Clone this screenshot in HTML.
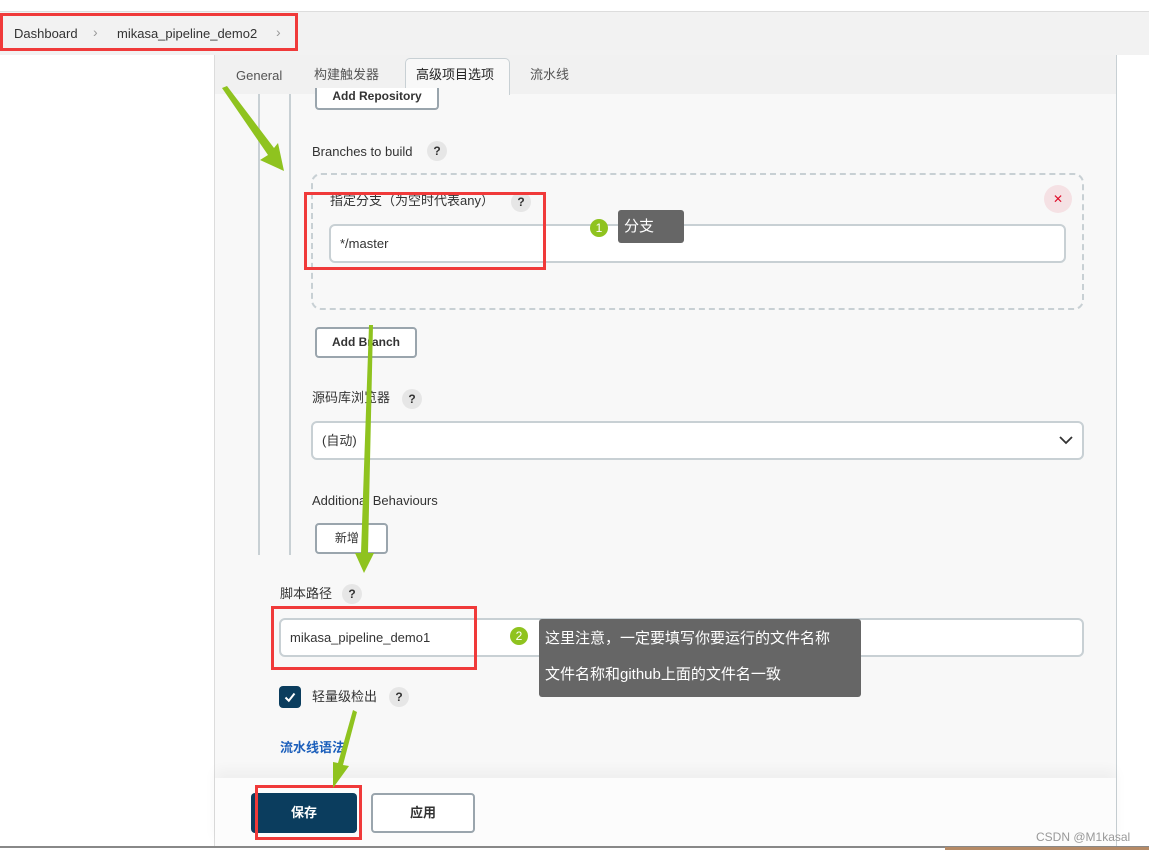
<!DOCTYPE html>
<html><head><meta charset="utf-8">
<style>
*{box-sizing:border-box;margin:0;padding:0}
body{width:1149px;height:850px;position:relative;overflow:hidden;background:#fff;font-family:"Liberation Sans","Noto Sans CJK SC",sans-serif;color:#333;font-size:13px;line-height:16px}
.a{position:absolute}
.q{position:absolute;width:20px;height:20px;border-radius:50%;background:#e6e6e6;color:#333;font-weight:bold;font-size:12px;text-align:center;line-height:20px}
.inp{position:absolute;background:#fff;border:2px solid #c8d0d4;border-radius:6px;font-size:13px;color:#333;padding-left:9px}
.btn{position:absolute;background:#fff;border:2px solid #9aa5ad;border-radius:4px;font-weight:bold;font-size:12px;color:#333;text-align:center}
.red{position:absolute;border:3px solid #f03a3a}
.tip{position:absolute;background:#666;color:#fff;font-size:15px;border-radius:3px}
.num{position:absolute;width:18px;height:18px;border-radius:50%;background:#8fc31f;color:#fff;font-size:12px;text-align:center;line-height:18px}
</style></head><body>
<div class="a" style="left:0;top:11px;width:1149px;height:1px;background:#ddd"></div>
<div class="a" style="left:0;top:12px;width:1149px;height:43px;background:#f2f2f2"></div>
<div class="a" style="left:14px;top:26px;font-size:13px;color:#333">Dashboard</div>
<div class="a" style="left:93px;top:24px;font-size:14px;color:#999">›</div>
<div class="a" style="left:117px;top:26px;font-size:13px;color:#333">mikasa_pipeline_demo2</div>
<div class="a" style="left:276px;top:24px;font-size:14px;color:#999">›</div>
<div class="red" style="left:0;top:13px;width:298px;height:38px"></div>

<div class="a" style="left:214px;top:55px;width:902px;height:795px;background:#f8f8f8;border-left:1px solid #dcdcdc"></div>
<div class="a" style="left:1116px;top:55px;width:1px;height:795px;background:#c8d0d4"></div>
<div class="a" style="left:215px;top:55px;width:901px;height:39px;background:#f1f1f1"></div>
<div class="a" style="left:236px;top:68px;color:#555">General</div>
<div class="a" style="left:314px;top:67px;color:#555">构建触发器</div>
<div class="a" style="left:405px;top:58px;width:105px;height:37px;background:#f8f8f8;border:1px solid #c8d0d4;border-bottom:none;border-radius:5px 5px 0 0"></div>
<div class="a" style="left:416px;top:67px;color:#222">高级项目选项</div>
<div class="a" style="left:530px;top:67px;color:#555">流水线</div>

<div class="a" style="left:258px;top:94px;width:2px;height:461px;background:#c8d0d4"></div>
<div class="a" style="left:289px;top:94px;width:2px;height:461px;background:#c8d0d4"></div>

<div class="btn" style="left:315px;top:88px;width:124px;height:22px;border-top:none;border-radius:0 0 4px 4px;line-height:16px">Add Repository</div>

<div class="a" style="left:312px;top:144px">Branches to build</div>
<div class="q" style="left:427px;top:141px">?</div>

<div class="a" style="left:311px;top:173px;width:773px;height:137px;border:2px dashed #c8d0d4;border-radius:10px"></div>
<div class="a" style="left:1044px;top:185px;width:28px;height:28px;border-radius:50%;background:#f5e1e4;color:#e0102c;text-align:center;line-height:28px;font-size:12px">✕</div>
<div class="a" style="left:330px;top:193px">指定分支（为空时代表any）</div>
<div class="q" style="left:511px;top:192px">?</div>
<div class="inp" style="left:329px;top:224px;width:737px;height:39px;line-height:35px">*/master</div>
<div class="red" style="left:304px;top:192px;width:242px;height:78px"></div>
<div class="num" style="left:590px;top:219px">1</div>
<div class="tip" style="left:618px;top:210px;width:66px;height:33px;line-height:33px;padding-left:6px">分支</div>

<div class="btn" style="left:315px;top:327px;width:102px;height:31px;line-height:27px">Add Branch</div>

<div class="a" style="left:312px;top:390px">源码库浏览器</div>
<div class="q" style="left:402px;top:389px">?</div>
<div class="inp" style="left:311px;top:421px;width:773px;height:39px;line-height:35px">(自动)</div>
<svg class="a" style="left:1058px;top:433px" width="16" height="14"><path d="M2 4 L8 10 L14 4" fill="none" stroke="#333" stroke-width="1.8"/></svg>

<div class="a" style="left:312px;top:493px">Additional Behaviours</div>
<div class="btn" style="left:315px;top:523px;width:73px;height:31px;line-height:27px;font-weight:normal">新增 ▾</div>

<div class="a" style="left:280px;top:586px">脚本路径</div>
<div class="q" style="left:342px;top:584px">?</div>
<div class="inp" style="left:279px;top:618px;width:805px;height:39px;line-height:35px">mikasa_pipeline_demo1</div>
<div class="red" style="left:271px;top:606px;width:206px;height:64px"></div>
<div class="num" style="left:510px;top:627px">2</div>
<div class="tip" style="left:539px;top:619px;width:322px;height:78px;padding:2px 0 0 6px;line-height:36px">这里注意，一定要填写你要运行的文件名称<br>文件名称和github上面的文件名一致</div>

<div class="a" style="left:279px;top:686px;width:22px;height:22px;border-radius:4px;background:#0b3d5e"></div>
<svg class="a" style="left:279px;top:686px" width="22" height="22"><path d="M6.5 11.5 L9.8 14.8 L15.5 7.5" fill="none" stroke="#fff" stroke-width="2"/></svg>
<div class="a" style="left:312px;top:689px">轻量级检出</div>
<div class="q" style="left:389px;top:687px">?</div>
<div class="a" style="left:280px;top:740px;color:#1c5fbb;font-weight:bold">流水线语法</div>

<div class="a" style="left:215px;top:778px;width:901px;height:68px;background:#fcfcfc;box-shadow:0 -8px 12px rgba(0,0,0,0.04)"></div>
<div class="a" style="left:251px;top:793px;width:106px;height:40px;background:#0b3d5e;border-radius:4px;color:#fff;font-weight:bold;text-align:center;line-height:40px">保存</div>
<div class="red" style="left:255px;top:785px;width:107px;height:55px"></div>
<div class="btn" style="left:371px;top:793px;width:104px;height:40px;line-height:36px;font-size:13px">应用</div>
<div class="a" style="left:1036px;top:829px;font-size:12px;color:#999">CSDN @M1kasal</div>
<div class="a" style="left:0;top:846px;width:1149px;height:2px;background:#888"></div>
<div class="a" style="left:0;top:848px;width:1149px;height:2px;background:#fff"></div>
<div class="a" style="left:945px;top:847px;width:204px;height:3px;background:#b58a66"></div>

<svg class="a" style="left:0;top:0" width="1149" height="850">
<g fill="#8fc31f">
<polygon points="222,88 227,86 274,148 278,143 284,171 260,160 268,155"/>
<polygon points="369,325 373,325 368,553 374,553 364,573 355,553 361,553"/>
<polygon points="353,710 357,712 343,765 349,766 333,788 333,762 338,763"/>
</g>
</svg>
</body></html>
